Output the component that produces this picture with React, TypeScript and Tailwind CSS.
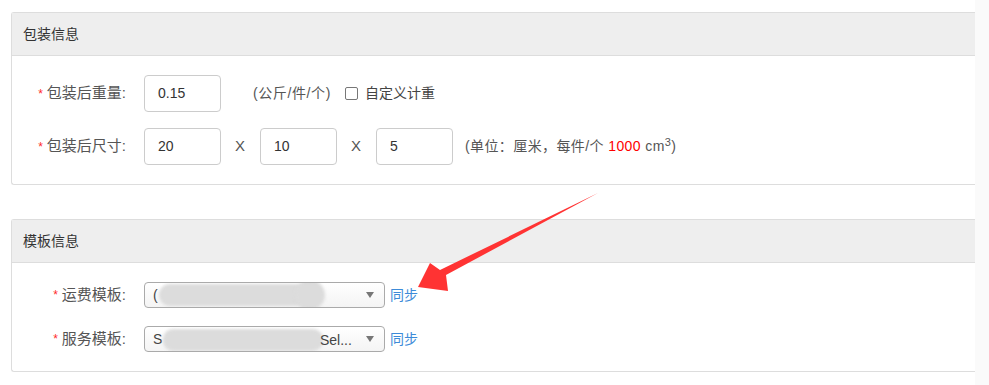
import type { PropsWithChildren, ReactNode } from "react";

const font = { fontFamily: '"Liberation Sans", "Noto Sans CJK SC", sans-serif' };

function Panel({ title, children }: PropsWithChildren<{ title: string }>) {
  return (
    <div className="rounded-l-[3px] border border-r-0 border-[#dddddd] bg-white">
      <div className="flex h-[43px] items-center border-b border-[#dddddd] bg-[#eeeeee] pl-[11px] text-[14px] text-[#333]">
        {title}
      </div>
      <div className="flex flex-col py-[19px]">{children}</div>
    </div>
  );
}

function Label({ children, width }: PropsWithChildren<{ width: string }>) {
  return (
    <div className={`flex shrink-0 items-center justify-end pr-[18px] text-[15px] text-[#555] ${width}`}>
      <span className="mr-[4px] text-[12px] text-[#ff2b2b]">*</span>
      {children}
    </div>
  );
}

function Box({ value }: { value: string }) {
  return (
    <div className="flex h-[37px] w-[77px] shrink-0 items-center rounded-[4px] border border-[#cccccc] pl-[13px] text-[14px] text-[#333]">
      {value}
    </div>
  );
}

function Select({ children }: { children: ReactNode }) {
  return (
    <div className="relative flex h-[26px] w-[241px] shrink-0 items-center overflow-hidden rounded-[4px] border border-[#aaaaaa] bg-gradient-to-b from-white to-[#f4f4f4] pl-[8px] text-[14px] text-[#444]">
      {children}
      <span className="absolute right-[10px] top-[9px] h-0 w-0 border-x-[4px] border-t-[6px] border-x-transparent border-t-[#777]" />
    </div>
  );
}

function Blob({ className }: { className: string }) {
  return <div className={`absolute bg-[#dcdcdc] blur-[1.5px] ${className}`} />;
}

export default function App() {
  return (
    <div className="relative h-[385px] w-[989px] overflow-hidden bg-white" style={font}>
      <div className="flex w-[975px] flex-col gap-[34px] pl-[11px] pt-[12px]">
        <Panel title="包装信息">
          <div className="flex h-[37px] items-center">
            <Label width="w-[132px]">包装后重量:</Label>
            <Box value="0.15" />
            <span className="ml-[32px] tracking-[0.6px] text-[14px] text-[#555]">(公斤/件/个)</span>
            <span className="ml-[14px] h-[13px] w-[13px] rounded-[2px] border border-[#777]" />
            <span className="ml-[7px] text-[14px] text-[#444]">自定义计重</span>
          </div>
          <div className="mt-[16px] flex h-[37px] items-center">
            <Label width="w-[132px]">包装后尺寸:</Label>
            <Box value="20" />
            <span className="w-[39px] pl-[14px] text-[15px] text-[#555]">X</span>
            <Box value="10" />
            <span className="w-[39px] pl-[14px] text-[15px] text-[#555]">X</span>
            <Box value="5" />
            <span className="ml-[12px] tracking-[0.4px] text-[14px] text-[#555]">
              (单位：厘米，每件/个 <span className="text-[#ff0000]">1000</span> cm
              <sup className="text-[11px]">3</sup>)
            </span>
          </div>
        </Panel>

        <Panel title="模板信息">
          <div className="flex h-[26px] items-center">
            <Label width="w-[132px]">运费模板:</Label>
            <Select>
              <span>(</span>
              <Blob className="left-[14px] top-[1px] h-[22px] w-[160px] rounded-[11px]" />
              <Blob className="left-[150px] top-[-3px] h-[30px] w-[30px] rounded-full bg-[#d4d4d4]" />
            </Select>
            <span className="ml-[5px] text-[14px] text-[#3d8bd8]">同步</span>
          </div>
          <div className="mt-[18px] flex h-[26px] items-center">
            <Label width="w-[132px]">服务模板:</Label>
            <Select>
              <span>S</span>
              <Blob className="left-[18px] top-[2px] h-[22px] w-[160px] rounded-[10px]" />
              <span className="absolute left-[175px] top-[3px]">Sel...</span>
            </Select>
            <span className="ml-[5px] text-[14px] text-[#3d8bd8]">同步</span>
          </div>
        </Panel>
      </div>
      <div className="absolute right-0 top-0 h-full w-[14px] bg-[#fafafa]" />

      <svg className="pointer-events-none absolute left-0 top-0" width="989" height="385">
        <path d="M598 193 L446 275 L448 291 L418 287 L430 263 L440 270 L598 193 Z" fill="#ff3333" />
      </svg>
    </div>
  );
}
